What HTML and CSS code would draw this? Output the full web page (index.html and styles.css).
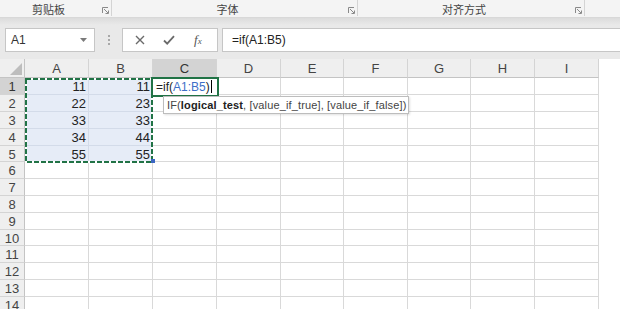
FILE: index.html
```html
<!DOCTYPE html>
<html lang="zh-CN">

<head>
    <meta charset="UTF-8">
    <meta name="viewport" content="width=device-width, initial-scale=1.0">
    <title>Excel - IF</title>
    <link rel="stylesheet" href="styles.css">
</head>

<body>
    <div class="ribbon">
        <div class="group g-clip">
            <span class="group-label">剪贴板</span>
            <svg class="launcher" width="7" height="7" viewBox="0 0 7 7"><path d="M0.5 6V0.5H6" fill="none" stroke="#8a8a8a"/><path d="M2 2L6 6M3.5 6.5H6.5V3.5" fill="none" stroke="#8a8a8a"/></svg>
        </div>
        <div class="group g-font">
            <span class="group-label">字体</span>
            <svg class="launcher" width="7" height="7" viewBox="0 0 7 7"><path d="M0.5 6V0.5H6" fill="none" stroke="#8a8a8a"/><path d="M2 2L6 6M3.5 6.5H6.5V3.5" fill="none" stroke="#8a8a8a"/></svg>
        </div>
        <div class="group g-align">
            <span class="group-label">对齐方式</span>
            <svg class="launcher" width="7" height="7" viewBox="0 0 7 7"><path d="M0.5 6V0.5H6" fill="none" stroke="#8a8a8a"/><path d="M2 2L6 6M3.5 6.5H6.5V3.5" fill="none" stroke="#8a8a8a"/></svg>
        </div>
    </div>

    <div class="fbar">
        <div class="name-box">
            <span>A1</span>
            <svg class="drop" width="7" height="4" viewBox="0 0 7 4"><path d="M0 0H7L3.5 4Z" fill="#7a7a7a"/></svg>
        </div>
        <div class="grip"><i></i><i></i><i></i></div>
        <div class="fx-buttons">
            <svg width="10" height="10" viewBox="0 0 10 10"><path d="M1 1L9 9M9 1L1 9" stroke="#6a6a6a" stroke-width="1.4"/></svg>
            <svg width="12" height="10" viewBox="0 0 12 10"><path d="M1 5.5L4.2 8.6L11 1.2" fill="none" stroke="#6a6a6a" stroke-width="1.8"/></svg>
            <span class="fx">f<sub>x</sub></span>
        </div>
        <div class="formula">=if(A1:B5)</div>
    </div>

    <div class="sheet">
        <div class="grid">
            <div class="corner"><svg width="12" height="12" viewBox="0 0 12 12"><path d="M12 0V12H0Z" fill="#bdbdbd"/></svg></div>
            <div class="col-head">A</div>
            <div class="col-head">B</div>
            <div class="col-head on">C</div>
            <div class="col-head">D</div>
            <div class="col-head">E</div>
            <div class="col-head">F</div>
            <div class="col-head">G</div>
            <div class="col-head">H</div>
            <div class="col-head">I</div>

            <div class="row-head on">1</div>
            <div class="cell sel num">11</div><div class="cell sel num">11</div><div class="cell"></div><div class="cell"></div><div class="cell"></div><div class="cell"></div><div class="cell"></div><div class="cell"></div><div class="cell"></div>
            <div class="row-head">2</div>
            <div class="cell sel num">22</div><div class="cell sel num">23</div><div class="cell"></div><div class="cell"></div><div class="cell"></div><div class="cell"></div><div class="cell"></div><div class="cell"></div><div class="cell"></div>
            <div class="row-head">3</div>
            <div class="cell sel num">33</div><div class="cell sel num">33</div><div class="cell"></div><div class="cell"></div><div class="cell"></div><div class="cell"></div><div class="cell"></div><div class="cell"></div><div class="cell"></div>
            <div class="row-head">4</div>
            <div class="cell sel num">34</div><div class="cell sel num">44</div><div class="cell"></div><div class="cell"></div><div class="cell"></div><div class="cell"></div><div class="cell"></div><div class="cell"></div><div class="cell"></div>
            <div class="row-head">5</div>
            <div class="cell sel num">55</div><div class="cell sel num">55</div><div class="cell"></div><div class="cell"></div><div class="cell"></div><div class="cell"></div><div class="cell"></div><div class="cell"></div><div class="cell"></div>
            <div class="row-head">6</div>
            <div class="cell"></div><div class="cell"></div><div class="cell"></div><div class="cell"></div><div class="cell"></div><div class="cell"></div><div class="cell"></div><div class="cell"></div><div class="cell"></div>
            <div class="row-head">7</div>
            <div class="cell"></div><div class="cell"></div><div class="cell"></div><div class="cell"></div><div class="cell"></div><div class="cell"></div><div class="cell"></div><div class="cell"></div><div class="cell"></div>
            <div class="row-head">8</div>
            <div class="cell"></div><div class="cell"></div><div class="cell"></div><div class="cell"></div><div class="cell"></div><div class="cell"></div><div class="cell"></div><div class="cell"></div><div class="cell"></div>
            <div class="row-head">9</div>
            <div class="cell"></div><div class="cell"></div><div class="cell"></div><div class="cell"></div><div class="cell"></div><div class="cell"></div><div class="cell"></div><div class="cell"></div><div class="cell"></div>
            <div class="row-head">10</div>
            <div class="cell"></div><div class="cell"></div><div class="cell"></div><div class="cell"></div><div class="cell"></div><div class="cell"></div><div class="cell"></div><div class="cell"></div><div class="cell"></div>
            <div class="row-head">11</div>
            <div class="cell"></div><div class="cell"></div><div class="cell"></div><div class="cell"></div><div class="cell"></div><div class="cell"></div><div class="cell"></div><div class="cell"></div><div class="cell"></div>
            <div class="row-head">12</div>
            <div class="cell"></div><div class="cell"></div><div class="cell"></div><div class="cell"></div><div class="cell"></div><div class="cell"></div><div class="cell"></div><div class="cell"></div><div class="cell"></div>
            <div class="row-head">13</div>
            <div class="cell"></div><div class="cell"></div><div class="cell"></div><div class="cell"></div><div class="cell"></div><div class="cell"></div><div class="cell"></div><div class="cell"></div><div class="cell"></div>
            <div class="row-head">14</div>
            <div class="cell"></div><div class="cell"></div><div class="cell"></div><div class="cell"></div><div class="cell"></div><div class="cell"></div><div class="cell"></div><div class="cell"></div><div class="cell"></div>
        </div>

        <!-- copy marquee around A1:B5 -->
        <svg class="marquee" width="128" height="85" viewBox="0 0 128 85">
            <rect x="1" y="1" width="126" height="83" fill="none" stroke="#ffffff" stroke-width="2"/>
            <rect x="1" y="1" width="126" height="83" fill="none" stroke="#217346" stroke-width="2" stroke-dasharray="5 2"/>
        </svg>
        <div class="ref-handle"></div>

        <div class="active-cell">=if(<span class="ref">A1:B5</span>)<span class="caret"></span></div>

        <div class="tip"><b>IF(</b><strong>logical_test</strong>, [value_if_true], [value_if_false])</div>
    </div>
</body>

</html>
```

FILE: styles.css
```css
body {
    margin: 0;
    width: 620px;
    height: 309px;
    overflow: hidden;
    font-family: 'Liberation Sans', 'Arial', 'Noto Sans CJK SC', sans-serif;
    color: #444;
    background: #fff;
}

/* ribbon group labels */
.ribbon {
    display: flex;
    height: 17px;
    background: #f4f4f4;
    border-bottom: 1px solid #d8d8d8;
}

.group {
    display: flex;
    align-items: center;
    box-sizing: border-box;
    border-right: 1px solid #d4d4d4;
    height: 16px;
    padding-right: 2px;
}

.g-clip {
    width: 112px;
}

.g-font {
    width: 246px;
}

.g-align {
    width: 227px;
}

.group-label {
    flex: 1;
    text-align: center;
    margin-right: 5px;
    font-family: 'Noto Sans CJK SC', sans-serif;
    font-size: 11px;
    line-height: 16px;
    color: #444;
    padding-top: 2px;
}

.launcher {
    margin-top: 5px;
}

/* formula bar */
.fbar {
    display: flex;
    align-items: flex-start;
    height: 41px;
    box-sizing: border-box;
    padding-top: 10px;
    background: linear-gradient(#dcdcdc, #e9e9e9 7px, #e9e9e9);
}

.name-box,
.fx-buttons,
.formula {
    height: 24px;
    box-sizing: border-box;
    background: #fff;
    border: 1px solid #c6c6c6;
}

.name-box {
    display: flex;
    align-items: center;
    justify-content: space-between;
    width: 90px;
    margin-left: 5px;
    padding: 0 7px 0 5px;
    font-size: 12px;
    color: #333;
}

.grip {
    width: 27px;
    display: flex;
    flex-direction: column;
    align-items: center;
    gap: 2px;
    padding-top: 7px;
}

.grip i {
    display: block;
    width: 2px;
    height: 2px;
    background: #a8a8a8;
}

.fx-buttons {
    display: flex;
    align-items: center;
    width: 96px;
    padding-left: 12px;
    gap: 18px;
}

.fx {
    font-family: 'Liberation Serif', serif;
    font-style: italic;
    font-size: 13px;
    color: #555;
    margin-left: 1px;
}

.fx sub {
    font-size: 9px;
    vertical-align: 0;
}

.formula {
    flex: 1;
    margin-left: 4px;
    margin-right: -2px;
    padding-left: 9px;
    font-size: 12px;
    line-height: 22px;
    color: #222;
}

/* worksheet */
.sheet {
    position: relative;
    height: 250px;
    overflow: hidden;
}

.grid {
    display: grid;
    grid-template-columns: 25px 64px 64px 64px 64px 63px 64px 63px 64px 64px;
    grid-template-rows: 19px repeat(2, 17px 17px 17px 17px 16px) 17px 17px 17px 17px;
    width: max-content;
    font-size: 13px;
}

.corner,
.col-head,
.row-head {
    box-sizing: border-box;
    background: #efefef;
    color: #444;
}

.corner {
    display: flex;
    align-items: flex-end;
    justify-content: flex-end;
    padding: 0 2px 2px 0;
    border-right: 1px solid #c4c4c4;
    border-bottom: 1px solid #c4c4c4;
}

.col-head {
    text-align: center;
    line-height: 19px;
    border-right: 1px solid #d4d4d4;
    border-bottom: 1px solid #c4c4c4;
}

.row-head {
    text-align: center;
    line-height: 17px;
    border-right: 1px solid #c4c4c4;
    border-bottom: 1px solid #d4d4d4;
}

.col-head.on,
.row-head.on {
    background: #d3d3d3;
    color: #333;
}

.cell {
    box-sizing: border-box;
    border-right: 1px solid #d9d9d9;
    border-bottom: 1px solid #d9d9d9;
    line-height: 17px;
    color: #222;
}

.cell.sel {
    background: #e6ecf7;
    border-color: #d3dbe9;
}

.num {
    text-align: right;
    padding-right: 2px;
}

.marquee {
    position: absolute;
    left: 25px;
    top: 19px;
}

.ref-handle {
    position: absolute;
    left: 151px;
    top: 100px;
    width: 4px;
    height: 4px;
    background: #3b66c2;
}

.active-cell {
    position: absolute;
    left: 151px;
    top: 18px;
    width: 68px;
    height: 20px;
    box-sizing: border-box;
    border: 2px solid #217346;
    background: #fff;
    padding-left: 3px;
    font-size: 12px;
    line-height: 16px;
    color: #222;
}

.ref {
    color: #3e6fc7;
}

.caret {
    display: inline-block;
    width: 1px;
    height: 13px;
    background: #000;
    vertical-align: -2px;
    margin-left: 1px;
}

.tip {
    position: absolute;
    left: 163px;
    top: 37px;
    width: 246px;
    height: 18px;
    box-sizing: border-box;
    border: 1px solid #bdbdbd;
    background: #fff;
    box-shadow: 1px 1px 2px rgba(0, 0, 0, 0.12);
    padding-left: 3px;
    font-size: 11px;
    letter-spacing: 0.14px;
    line-height: 16px;
    color: #444;
    white-space: nowrap;
}

.tip b {
    font-weight: normal;
}

.tip strong {
    color: #222;
}
```
